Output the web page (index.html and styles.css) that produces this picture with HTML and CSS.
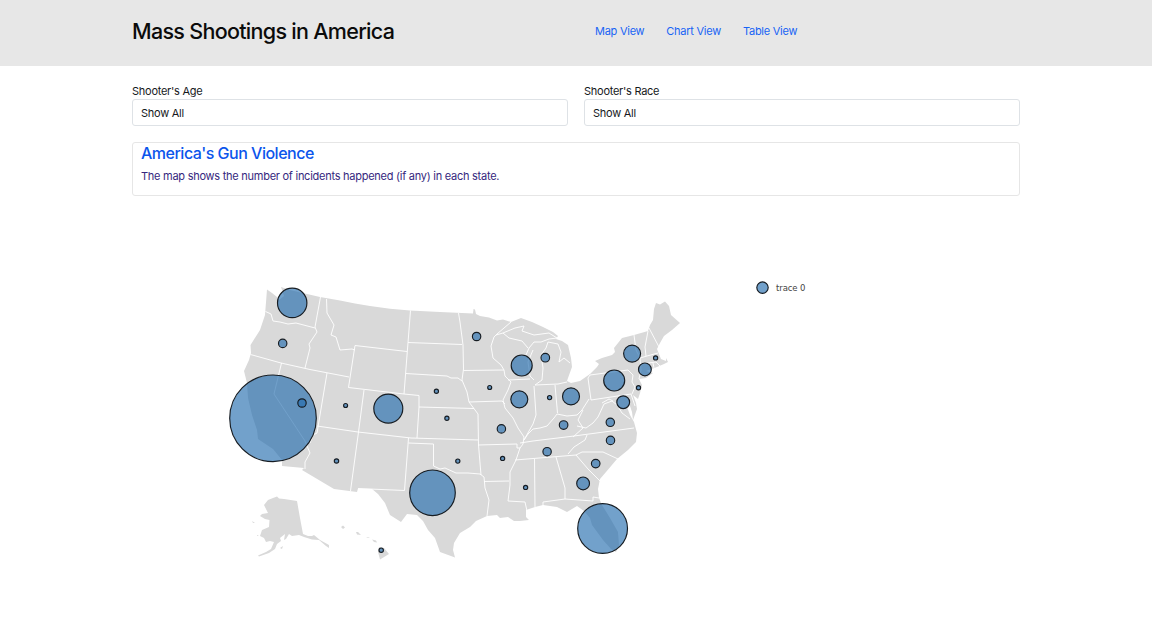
FILE: index.html
```html
<!DOCTYPE html>
<html lang="en">
<head>
<meta charset="utf-8">
<title>Mass Shootings in America</title>
<link rel="stylesheet" href="styles.css">
</head>
<body>
<header class="header">
  <div class="container header-row">
    <h1 class="title"><span>Mass Shootings in America</span></h1>
    <nav class="nav"><a href="#map">Map View</a><a href="#chart">Chart View</a><a href="#table">Table View</a></nav>
  </div>
</header>
<main class="container">
  <div class="filters">
    <div class="field"><label>Shooter's Age</label><div class="select">Show All</div></div>
    <div class="field"><label>Shooter's Race</label><div class="select">Show All</div></div>
  </div>
  <section class="card">
    <h2 class="card-title"><span>America's Gun Violence</span></h2>
    <p class="card-text"><span>The map shows the number of incidents happened (if any) in each state.</span></p>
  </section>
  <svg class="map" viewBox="132 196 888 448">
    <g class="land">
      <path d="M267 289.500L272 293L277 297L279 300L284 296L281 287L290 290L307 294L320 297L340 300.500L355 303.500L370 306L390 308.700L410 310.500L440 312L473 313.500L473.500 309L475 309.500L476 314L480 316L489 317.500L497 320.500L503 319.500L511 322L521 318L532 322L543 327L553 332L558 336L556 339L562 341L568 345L571 358L572 367L568 378L567 381L571 383L580 381L590 374L597 367L599 364L595 361L602 358L612 355L615 352L614 348L622 338L634 335L648 331L650 325L653 320L654 309L656 303L660 304.500L665 301.500L669 306L671 315L680 323L672 330L664 336L660 343L657 349L659 354L661 359L666 361L666 358L668 362L664 364L657 367L646 371L653 373L646 378L639 379L642 385L640 393L638 399L633 395L636 403L637 409L633 420L632 412L629 403L627 407L630 415L634 422L637 433L636 442L628 450L617 459L606 472L600 479L598 489L599 498L602 505L610 518L618 532L619 545L616 552L611 549L603 540L592 525L590 518L584 511L577 506L567 512L557 507L543 505L535 507L526 510L526 517L529 520L520 521L514 521L508 517L500 518L497 515L487 516L476 521L470 527L460 533L454 543L453 550L455 557.500L440 552L435 538L428 530L423 521L417 515L407 514L401 522L390 515L385 503L378 494L372 489L358 488.500L357 492L334 489L302 470L304 468L282 466L282 460L273 449L258 439L257 430L252 415L248 398L247 383L244 371L249 360L251 353L250.500 345L260 330L265 315Z"/>
      <path d="M264 505L268 500L273 498L277 496.500L279 498.500L284 499L297 501L300 518L303 534L308 536L312 536L314 535L320 540L329 545L329 548L326 546L319 540L312 539.500L304 537L299 535L292 536L289 534L286 539L284 540L285 534L280 538L281 541L277 544L275 549L269 553L259 556.500L258 555.500L266 552L271 549L274 542L270 541L266 542L264 538L260 536L262 530L269 527L269.500 520L265 519L260 516L262 514L268 513Z M280 548l3-2l-1 3z M252 521l3 2l-2 0z M341 527l2-1.500l2 2l-2 1.500z M356 532l2 0l3 3l-4-.5z M366 537l4 .5l-2 .5z M372 539.500l4 1l1 2l-3-.5z M379 547L384 548L389 554L380 559.500L378 552Z M257 535l2 1l-2 0z"/>
    </g>
    <path class="borders" d="M265.500 311.500L271 314L273 321L280 322L288 324L296 323L315 328
M320.500 297L315 327L317 332L309 344L310 348L305 368
M250.500 354.500L281 363L310 369.500L349 377
M281.500 363L274 394L305 441L310 453L305 462L305 469M327 373L317 433L313 435L310 443L308 442
M326.500 299L327 313L334 325L331 335L336 337L340 350L352 349L355 350M355 345.500L407 351.500M355 345.500L348.500 387.500L404 394L419 395.500L419 407L474 408.500M410.500 310.500L404 394M364 390L358.500 432L350.500 491
M317 426L358 432L411 438L478 440M408 342.500L462 344.500M406 373.500L447 376L451 378L458 378L462 381M458.500 313L460 322L463 345L463.500 369L462 380L467 392L469 402L475 410L478 414L478.500 445L481 475M419 407L417 438
M463.500 370.500L504 370M469 402L502 401L505 404M511 322L497 334L494 337L491 346L493 358L501 365L504 370L505 376L511 382L508 390L503 400L505 408L513 418L518 428L524 437L523 444L520 448L516 460L510 472L510 485L508 501L525 502L527 511M478 445L517 444L517 448L520 448
M496 335L503 333L509 338L522 341L528 348M503 333L515 328L524 326L522 331L534 335L549 333L557 338L549 339L541 342L534 342L529 348L526 355M533 350L528 362L530 376L534 380M535 385L542 380L543 368L541 355L546 348L548 342L558 344L561 352L559 362L564 358L570 363M508 380L530 379M535 385L558 384L567 382
M534 386L536 415L533 424L529 431L524 440M555 385L557.500 413M524 440L528 434L533 429L540 428L547 426L554 418L557 414L567 416L577 415L582 410L589 399M588 378L591 400L631 394L635 406M588 378L590 375L628 370L633 375L632 382L635 387L632 394
M583 410L578 420L583 428L573 437M577 426L586 428L593 423L598 417L604 404L612 401L617 405L622 413L630 419
M520 443L533 441L574 436L634 428M515 460L576 455L582 452L603 452L618 459M568 454L574 447L585 440L587 435
M408.500 438L404.500 490.500L358 488.500M408.500 443L433.500 444L433.500 466L440 469L445 468L456 473L468 473L480 474L484 477L485 488L489 500L487 516M484 481.500L509 481M534.500 459L535 507M556 457L565 488L565 499M543 506L543 502L565 499L593 501L593 497L599 498M576 455L588 469L600 481
M634 335L636 350L640 358L641 370L639 379M648 331L645 347L646 356M649 328L659 347M640 358L647 356L658 353M641 364L656 362L660 366M653 363L654 368M602 403L609 399L613 401"/>
    <g class="bubbles">
      <circle cx="273" cy="418.300" r="43.300"/><circle cx="302" cy="403" r="4.200"/><circle cx="292.200" cy="302.900" r="14.700"/><circle cx="282.700" cy="343.400" r="4.200"/><circle cx="345.600" cy="405.500" r="2"/><circle cx="336.500" cy="461" r="2.200"/><circle cx="388.300" cy="408.600" r="14.500"/><circle cx="432.500" cy="492.800" r="22.800"/><circle cx="436.400" cy="391.300" r="2.100"/><circle cx="446.900" cy="418.200" r="2.100"/><circle cx="457.800" cy="461.100" r="2.100"/><circle cx="476.600" cy="336.500" r="4.200"/><circle cx="489.700" cy="387.500" r="2"/><circle cx="501.400" cy="428.900" r="4.200"/><circle cx="502.600" cy="458.400" r="2.100"/><circle cx="525.600" cy="487.400" r="2.100"/><circle cx="521.700" cy="365.500" r="10.500"/><circle cx="519.300" cy="399.300" r="8.500"/><circle cx="545.300" cy="357.700" r="4.300"/><circle cx="549.600" cy="397.600" r="2.100"/><circle cx="571" cy="396.400" r="8.500"/><circle cx="563.600" cy="425" r="4.300"/><circle cx="547.100" cy="451.700" r="4.200"/><circle cx="610.300" cy="422.300" r="4.200"/><circle cx="610.500" cy="440.400" r="4.200"/><circle cx="595.700" cy="463.600" r="4.300"/><circle cx="583.100" cy="483.400" r="6.400"/><circle cx="602.600" cy="528.500" r="24.900"/><circle cx="623.200" cy="402.200" r="6.400"/><circle cx="614.200" cy="380.500" r="10.500"/><circle cx="638.500" cy="387.700" r="2.100"/><circle cx="632.100" cy="353.600" r="8.500"/><circle cx="644.900" cy="369.400" r="6.400"/><circle cx="655.600" cy="357.900" r="2.100"/><circle cx="381.200" cy="550.200" r="2.200"/><circle cx="762.500" cy="287.600" r="5.700"/>
    </g>
    <text class="legend" x="776" y="291" textLength="29.500">trace 0</text>
  </svg>
</main>
</body>
</html>
```
FILE: styles.css
```css
* { box-sizing: border-box; }
body { margin: 0; height: 644px; overflow: hidden; background: #fff; color: #16191c; font: 11px/17px Inter, sans-serif; letter-spacing: -.26px; }
.container { width: 888px; margin: 0 auto; }
.header { height: 66px; background: #e7e7e7; }
.header-row { display: grid; grid-template-columns: 463px 1fr; padding-top: 17px; }
.title { margin: 0; font-size: 21.5px; font-weight: 500; line-height: 28px; letter-spacing: -.7px; color: #0b0b0b; }
.nav { display: flex; gap: 22px; padding-top: 6px; }
.nav a { color: #1764f5; text-decoration: none; }
.filters { display: grid; grid-template-columns: 1fr 1fr; gap: 16px; padding-top: 16px; }
.field label { display: block; height: 17px; line-height: 18px; }
.select { height: 27px; padding: 0 8px; border: 1px solid #dee2e6; border-radius: 3px; line-height: 26px; }
.card { height: 54px; margin-top: 16px; padding: 0 8px; border: 1px solid #e6e6e6; border-radius: 3px; }
.card-title { margin: 0; font-size: 16px; font-weight: 500; line-height: 20px; letter-spacing: -.5px; color: #0b55ec; }
.card-text { margin: 5px 0 0; line-height: 17px; color: #35277e; }
.map { display: block; width: 888px; height: 448px; }
.land { fill: #d9d9d9; }
.borders { fill: none; stroke: #fff; stroke-width: .9; stroke-linejoin: round; }
.bubbles { fill: #1f6aad; fill-opacity: .63; stroke: #161c22; stroke-width: 1.15; }
.legend { font: 8.5px "DejaVu Sans", sans-serif; letter-spacing: 0; fill: #444; }
```
